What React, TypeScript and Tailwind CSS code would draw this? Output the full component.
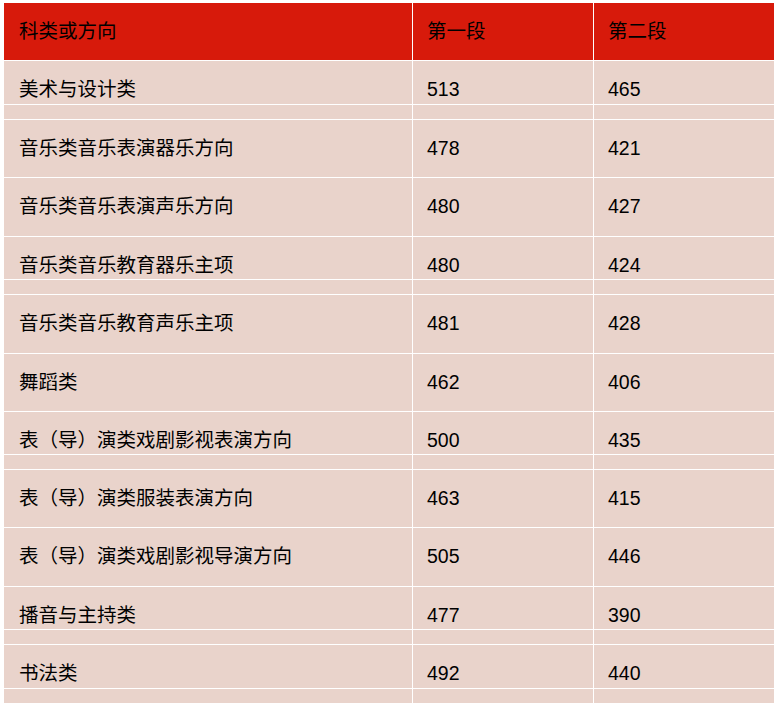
import React from 'react';

type Row = {
  name: string;
  first: string;
  second: string;
  h: string;
  split?: boolean;
};

const rows: Row[] = [
  { name: '美术与设计类', first: '513', second: '465', h: 'h-[58px]', split: true },
  { name: '音乐类音乐表演器乐方向', first: '478', second: '421', h: 'h-[57px]' },
  { name: '音乐类音乐表演声乐方向', first: '480', second: '427', h: 'h-[58px]' },
  { name: '音乐类音乐教育器乐主项', first: '480', second: '424', h: 'h-[57px]', split: true },
  { name: '音乐类音乐教育声乐主项', first: '481', second: '428', h: 'h-[58px]' },
  { name: '舞蹈类', first: '462', second: '406', h: 'h-[57px]' },
  { name: '表（导）演类戏剧影视表演方向', first: '500', second: '435', h: 'h-[57px]', split: true },
  { name: '表（导）演类服装表演方向', first: '463', second: '415', h: 'h-[57px]' },
  { name: '表（导）演类戏剧影视导演方向', first: '505', second: '446', h: 'h-[58px]' },
  { name: '播音与主持类', first: '477', second: '390', h: 'h-[57px]', split: true },
  { name: '书法类', first: '492', second: '440', h: 'h-[58px]', split: true },
];

const Cell: React.FC<{ text: string; split?: boolean; pad: string }> = ({ text, split, pad }) => {
  if (!split) {
    return <div className={`flex items-center bg-[#e9d3cb] ${pad}`}>{text}</div>;
  }
  return (
    <div className="flex flex-col gap-px">
      <div className={`flex flex-1 items-center bg-[#e9d3cb] pt-[15px] ${pad}`}>{text}</div>
      <div className="h-[14px] bg-[#e9d3cb]" />
    </div>
  );
};

const App: React.FC = () => {
  return (
    <div
      className="h-[707px] w-[778px] overflow-hidden bg-white px-[4px] pt-[3px] text-[19.5px] leading-none text-black"
      style={{ fontFamily: '"Liberation Sans", "Noto Sans CJK SC", sans-serif' }}
    >
      <div className="flex flex-col gap-px">
        {/* header */}
        <div className="grid h-[57px] grid-cols-[408px_180px_180px] gap-px">
          <div className="flex items-center bg-[#d71a0b] pl-[15px]">科类或方向</div>
          <div className="flex items-center bg-[#d71a0b] pl-[14px]">第一段</div>
          <div className="flex items-center bg-[#d71a0b] pl-[14px]">第二段</div>
        </div>
        {rows.map((r) => (
          <div key={r.name} className={`grid grid-cols-[408px_180px_180px] gap-px ${r.h}`}>
            <Cell text={r.name} split={r.split} pad="pl-[15px]" />
            <Cell text={r.first} split={r.split} pad="pl-[14px]" />
            <Cell text={r.second} split={r.split} pad="pl-[14px]" />
          </div>
        ))}
      </div>
    </div>
  );
};

export default App;
